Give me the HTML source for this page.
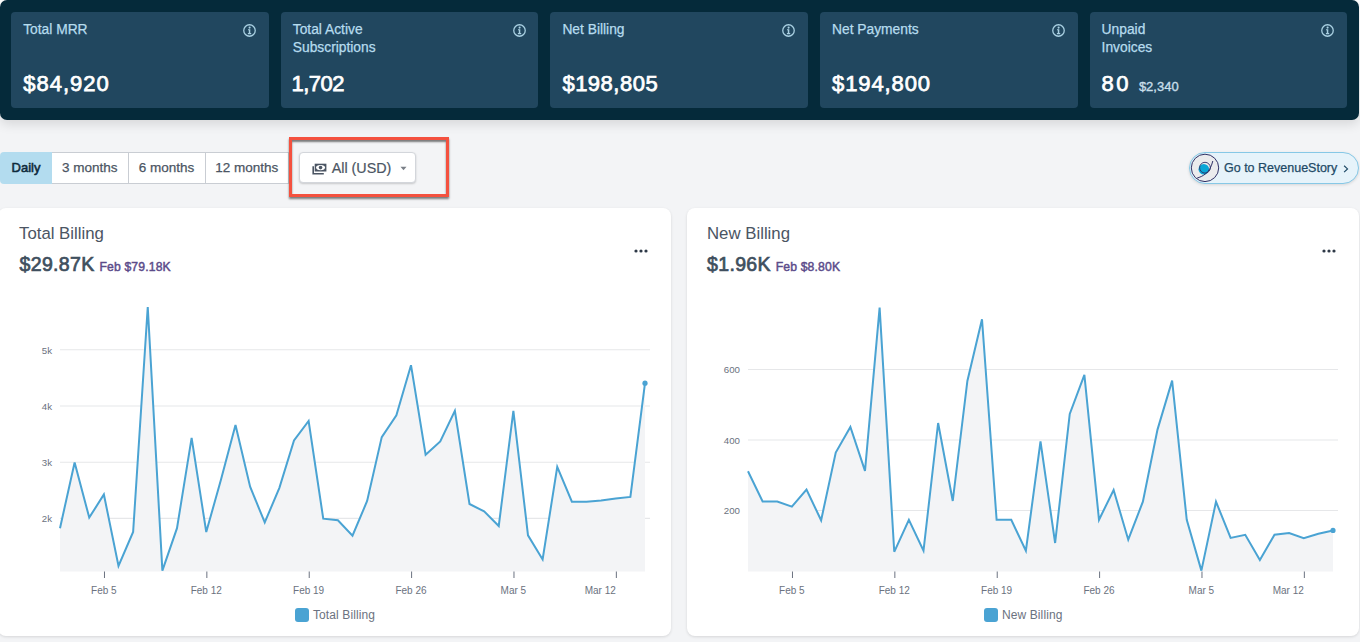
<!DOCTYPE html>
<html><head><meta charset="utf-8"><style>
*{box-sizing:border-box;margin:0;padding:0}
html,body{width:1360px;height:642px;overflow:hidden;background:#f3f4f6;font-family:"Liberation Sans",sans-serif}
.topwhite{position:absolute;left:0;top:0;width:1360px;height:40px;background:#fff}
.hdr{position:absolute;left:0;top:0;width:1359px;height:120px;background:#052a3a;border-radius:7px;box-shadow:0 4px 12px rgba(0,0,0,.12)}
.kpi{position:absolute;top:12px;width:257.6px;height:96px;background:#21475f;border-radius:4px;color:#fff}
.kt{position:absolute;left:12px;top:8.5px;font-size:13.8px;line-height:18px;-webkit-text-stroke:.25px #b6dcee;color:#b6dcee}
.ki{position:absolute;right:12.9px;top:11.8px;width:13px;height:13px}
.ki svg{display:block}
.kv{position:absolute;left:12px;top:58.8px;font-size:22px;line-height:26px;font-weight:normal;-webkit-text-stroke:.75px #fff;letter-spacing:.5px;color:#fff;white-space:nowrap}
.ksub{-webkit-text-stroke:.35px #c8dfea;font-size:13px;margin-left:7.8px;color:#c8dfea;letter-spacing:0}
.grp{position:absolute;left:0;top:152px;height:32px;display:flex}
.grp div{height:32px;line-height:30px;font-size:13.5px;color:#4b5563;-webkit-text-stroke:.25px #4b5563;background:#fff;border:1px solid #c9cdd3;border-left:none;text-align:center}
.grp .on{background:#b3dcef;color:#0e2a3b;-webkit-text-stroke:.55px #0e2a3b;border:none;border-radius:4px 0 0 4px;font-size:13px;line-height:32px}
.dd{position:absolute;left:298.7px;top:152.3px;width:117.8px;height:31px;background:#fff;border:1px solid #d3d6db;border-radius:4px;box-shadow:0 1px 2px rgba(0,0,0,.18)}
.ddt{position:absolute;left:32px;top:6px;font-size:14.3px;line-height:18px;color:#4b5563;-webkit-text-stroke:.2px #4b5563}
.red{position:absolute;left:289px;top:137px;width:160px;height:60px;border:3px solid #f4513f;box-shadow:0 2px 2px rgba(0,0,0,.5), inset 0 2px 2px rgba(0,0,0,.5)}
.rs{position:absolute;left:1189px;top:152px;width:170px;height:32px;border:1.5px solid #86c8e6;background:#e6f3fa;border-radius:16px;box-shadow:0 1px 3px rgba(0,0,0,.12)}
.rst{position:absolute;left:34px;top:7px;font-size:12.5px;line-height:16px;color:#1e4a66;-webkit-text-stroke:.25px #1e4a66}
.card{position:absolute;top:208px;height:428px;background:#fff;border-radius:8px;box-shadow:0 1px 3px rgba(0,0,0,.12)}
.ct{position:absolute;left:19px;top:223.8px;font-size:16.8px;line-height:20px;color:#4b5563}
.cv{position:absolute;left:19.5px;top:252.5px;font-size:19.5px;line-height:22px;font-weight:normal;-webkit-text-stroke:.7px #3f4f5e;letter-spacing:.35px;color:#3f4f5e;white-space:nowrap}
.cv span{font-size:12.2px;color:#5b4b8a;-webkit-text-stroke:.45px #5b4b8a;margin-left:4.8px;letter-spacing:.15px}
.dots{position:absolute;top:248.5px}
svg.ch{position:absolute;left:0;top:0}
.yl{font-size:9.7px;fill:#6b7280;font-family:"Liberation Sans",sans-serif}
.xl{font-size:10px;fill:#6b7280;font-family:"Liberation Sans",sans-serif}
.lg{position:absolute;top:608px;height:14px;font-size:12px;line-height:14px;letter-spacing:.1px;color:#6b7280;white-space:nowrap}
.lg i{display:inline-block;width:14px;height:14px;border-radius:3px;background:#4aa3d3;vertical-align:top;margin-right:4px}
</style></head><body>
<div class="topwhite"></div>
<div class="hdr"></div>
<div class="kpi" style="left:11.2px"><div class="kt">Total MRR</div><div class="ki"><svg width="13" height="13" viewBox="0 0 13 13"><circle cx="6.5" cy="6.5" r="5.75" fill="none" stroke="#a9d0e2" stroke-width="1.3"/><circle cx="6.6" cy="3.6" r="1.05" fill="#a9d0e2"/><path d="M5.0 5.2h2.3v3.9h0.9v1.1H4.9V9.1h0.9V6.3H5.0z" fill="#a9d0e2"/></svg></div><div class="kv" style="letter-spacing:1px">$84,920</div></div>
<div class="kpi" style="left:280.8px"><div class="kt">Total Active<br>Subscriptions</div><div class="ki"><svg width="13" height="13" viewBox="0 0 13 13"><circle cx="6.5" cy="6.5" r="5.75" fill="none" stroke="#a9d0e2" stroke-width="1.3"/><circle cx="6.6" cy="3.6" r="1.05" fill="#a9d0e2"/><path d="M5.0 5.2h2.3v3.9h0.9v1.1H4.9V9.1h0.9V6.3H5.0z" fill="#a9d0e2"/></svg></div><div class="kv" style="letter-spacing:-0.5px;margin-left:-1.4px">1,702</div></div>
<div class="kpi" style="left:550.4px"><div class="kt">Net Billing</div><div class="ki"><svg width="13" height="13" viewBox="0 0 13 13"><circle cx="6.5" cy="6.5" r="5.75" fill="none" stroke="#a9d0e2" stroke-width="1.3"/><circle cx="6.6" cy="3.6" r="1.05" fill="#a9d0e2"/><path d="M5.0 5.2h2.3v3.9h0.9v1.1H4.9V9.1h0.9V6.3H5.0z" fill="#a9d0e2"/></svg></div><div class="kv" style="letter-spacing:.5px">$198,805</div></div>
<div class="kpi" style="left:820px"><div class="kt">Net Payments</div><div class="ki"><svg width="13" height="13" viewBox="0 0 13 13"><circle cx="6.5" cy="6.5" r="5.75" fill="none" stroke="#a9d0e2" stroke-width="1.3"/><circle cx="6.6" cy="3.6" r="1.05" fill="#a9d0e2"/><path d="M5.0 5.2h2.3v3.9h0.9v1.1H4.9V9.1h0.9V6.3H5.0z" fill="#a9d0e2"/></svg></div><div class="kv" style="letter-spacing:.9px">$194,800</div></div>
<div class="kpi" style="left:1089.6px"><div class="kt">Unpaid<br>Invoices</div><div class="ki"><svg width="13" height="13" viewBox="0 0 13 13"><circle cx="6.5" cy="6.5" r="5.75" fill="none" stroke="#a9d0e2" stroke-width="1.3"/><circle cx="6.6" cy="3.6" r="1.05" fill="#a9d0e2"/><path d="M5.0 5.2h2.3v3.9h0.9v1.1H4.9V9.1h0.9V6.3H5.0z" fill="#a9d0e2"/></svg></div><div class="kv" style="letter-spacing:0"><span style="letter-spacing:2.5px">80</span><span class="ksub">$2,340</span></div></div>

<div class="grp"><div class="on" style="width:52px">Daily</div><div style="width:76.5px">3 months</div><div style="width:77px">6 months</div><div style="width:83.5px">12 months</div></div>
<div class="dd"><svg style="position:absolute;left:12px;top:10px" width="16" height="12" viewBox="0 0 16 12"><rect x="2.7" y="0.7" width="11.7" height="7.8" fill="#4b5563"/><ellipse cx="8.55" cy="4.6" rx="4.5" ry="2.55" fill="#fff"/><circle cx="8.55" cy="4.6" r="1.8" fill="#4b5563"/><path d="M1.2 3.3 V10.7 H11.8" fill="none" stroke="#4b5563" stroke-width="1.6"/></svg><div class="ddt">All (USD)</div><svg style="position:absolute;left:100px;top:13px" width="7" height="5" viewBox="0 0 7 5"><path d="M0.5 0.8 H6.5 L3.5 4.2 Z" fill="#7a7f87"/></svg></div>
<div class="red"></div>
<div class="rs"><svg style="position:absolute;left:-1.5px;top:-1.5px" width="32" height="32" viewBox="0 0 32 32"><circle cx="16" cy="15.9" r="13.7" fill="#ebebed" stroke="#2f3166" stroke-width="1"/><circle cx="14.8" cy="17.2" r="5.3" fill="#0aa6d6"/><circle cx="16" cy="15.7" r="5.4" fill="none" stroke="#2f3166" stroke-width="0.9"/><path d="M8.2 26 C13 24.6 21 21.5 23.8 9" fill="none" stroke="#2f3166" stroke-width="1"/></svg><div class="rst">Go to RevenueStory</div><svg style="position:absolute;left:153px;top:12px" width="6" height="8" viewBox="0 0 6 8"><path d="M1.1 0.7 L4.5 3.9 L1.1 7.1" fill="none" stroke="#1e4a66" stroke-width="1.2"/></svg></div>
<div class="card" style="left:-2px;width:673px"></div>
<div class="card" style="left:687px;width:672px"></div>
<div class="ct">Total Billing</div>
<div class="cv">$29.87K<span>Feb $79.18K</span></div>
<div class="ct" style="left:707px">New Billing</div>
<div class="cv" style="left:707px">$1.96K<span>Feb $8.80K</span></div>
<svg class="dots" style="left:634px" width="14" height="4" viewBox="0 0 14 4"><circle cx="2" cy="2" r="1.6" fill="#2e3947"/><circle cx="7" cy="2" r="1.6" fill="#2e3947"/><circle cx="12" cy="2" r="1.6" fill="#2e3947"/></svg>
<svg class="dots" style="left:1322px" width="14" height="4" viewBox="0 0 14 4"><circle cx="2" cy="2" r="1.6" fill="#2e3947"/><circle cx="7" cy="2" r="1.6" fill="#2e3947"/><circle cx="12" cy="2" r="1.6" fill="#2e3947"/></svg>
<svg class="ch" width="1360" height="642" viewBox="0 0 1360 642">
<line x1="60" y1="349.8" x2="650" y2="349.8" stroke="#e6e7e9" stroke-width="1.1"/>
<text x="52" y="353.6" text-anchor="end" class="yl">5k</text>
<line x1="60" y1="406" x2="650" y2="406" stroke="#e6e7e9" stroke-width="1.1"/>
<text x="52" y="409.8" text-anchor="end" class="yl">4k</text>
<line x1="60" y1="462.2" x2="650" y2="462.2" stroke="#e6e7e9" stroke-width="1.1"/>
<text x="52" y="466.0" text-anchor="end" class="yl">3k</text>
<line x1="60" y1="518.4" x2="650" y2="518.4" stroke="#e6e7e9" stroke-width="1.1"/>
<text x="52" y="522.1999999999999" text-anchor="end" class="yl">2k</text>
<path d="M60.00,528.20 L74.62,462.50 L89.25,517.60 L103.88,494.50 L118.50,566.00 L133.12,532.00 L147.75,307.00 L162.38,570.60 L177.00,528.20 L191.62,437.80 L206.25,532.00 L220.88,480.00 L235.50,425.00 L250.12,486.70 L264.75,522.50 L279.38,487.80 L294.00,440.40 L308.62,421.00 L323.25,518.70 L337.88,520.30 L352.50,535.70 L367.12,501.00 L381.75,437.10 L396.38,415.20 L411.00,365.20 L425.62,454.75 L440.25,441.50 L454.88,410.80 L469.50,504.00 L484.12,511.40 L498.75,526.00 L513.38,410.80 L528.00,535.30 L542.62,559.50 L557.25,466.90 L571.88,501.70 L586.50,501.70 L601.12,500.60 L615.75,498.40 L630.38,496.90 L645.00,383.20 L645.00,571.5 L60.00,571.5 Z" fill="#f3f4f6"/>
<path d="M60.00,528.20 L74.62,462.50 L89.25,517.60 L103.88,494.50 L118.50,566.00 L133.12,532.00 L147.75,307.00 L162.38,570.60 L177.00,528.20 L191.62,437.80 L206.25,532.00 L220.88,480.00 L235.50,425.00 L250.12,486.70 L264.75,522.50 L279.38,487.80 L294.00,440.40 L308.62,421.00 L323.25,518.70 L337.88,520.30 L352.50,535.70 L367.12,501.00 L381.75,437.10 L396.38,415.20 L411.00,365.20 L425.62,454.75 L440.25,441.50 L454.88,410.80 L469.50,504.00 L484.12,511.40 L498.75,526.00 L513.38,410.80 L528.00,535.30 L542.62,559.50 L557.25,466.90 L571.88,501.70 L586.50,501.70 L601.12,500.60 L615.75,498.40 L630.38,496.90 L645.00,383.20" fill="none" stroke="#4aa3d3" stroke-width="2" stroke-linejoin="miter" stroke-miterlimit="4"/>
<circle cx="645.00" cy="383.20" r="2.6" fill="#4aa3d3"/>
<line x1="104.47" y1="571.5" x2="104.47" y2="578" stroke="#6b7280" stroke-width="1"/>
<text x="103.88" y="593.8" text-anchor="middle" class="xl">Feb 5</text>
<line x1="206.85" y1="571.5" x2="206.85" y2="578" stroke="#6b7280" stroke-width="1"/>
<text x="206.25" y="593.8" text-anchor="middle" class="xl">Feb 12</text>
<line x1="309.23" y1="571.5" x2="309.23" y2="578" stroke="#6b7280" stroke-width="1"/>
<text x="308.62" y="593.8" text-anchor="middle" class="xl">Feb 19</text>
<line x1="411.60" y1="571.5" x2="411.60" y2="578" stroke="#6b7280" stroke-width="1"/>
<text x="411.00" y="593.8" text-anchor="middle" class="xl">Feb 26</text>
<line x1="513.98" y1="571.5" x2="513.98" y2="578" stroke="#6b7280" stroke-width="1"/>
<text x="513.38" y="593.8" text-anchor="middle" class="xl">Mar 5</text>
<line x1="616.35" y1="571.5" x2="616.35" y2="578" stroke="#6b7280" stroke-width="1"/>
<text x="615.75" y="593.8" text-anchor="end" class="xl">Mar 12</text>
<line x1="748" y1="369.5" x2="1338" y2="369.5" stroke="#e6e7e9" stroke-width="1.1"/>
<text x="740" y="373.3" text-anchor="end" class="yl">600</text>
<line x1="748" y1="440" x2="1338" y2="440" stroke="#e6e7e9" stroke-width="1.1"/>
<text x="740" y="443.8" text-anchor="end" class="yl">400</text>
<line x1="748" y1="510.5" x2="1338" y2="510.5" stroke="#e6e7e9" stroke-width="1.1"/>
<text x="740" y="514.3" text-anchor="end" class="yl">200</text>
<path d="M748.00,471.30 L762.62,501.50 L777.25,501.50 L791.88,506.60 L806.50,489.60 L821.12,520.30 L835.75,452.50 L850.38,426.90 L865.00,470.90 L879.62,307.60 L894.25,551.80 L908.88,519.80 L923.50,550.70 L938.12,423.00 L952.75,501.00 L967.38,381.00 L982.00,319.30 L996.62,519.80 L1011.25,519.80 L1025.88,550.70 L1040.50,441.50 L1055.12,543.00 L1069.75,414.00 L1084.38,374.90 L1099.00,519.80 L1113.62,490.00 L1128.25,539.70 L1142.88,501.70 L1157.50,429.60 L1172.12,380.60 L1186.75,519.80 L1201.38,570.60 L1216.00,501.70 L1230.62,537.90 L1245.25,534.80 L1259.88,560.00 L1274.50,534.80 L1289.12,533.00 L1303.75,538.10 L1318.38,533.70 L1333.00,530.40 L1333.00,571.5 L748.00,571.5 Z" fill="#f3f4f6"/>
<path d="M748.00,471.30 L762.62,501.50 L777.25,501.50 L791.88,506.60 L806.50,489.60 L821.12,520.30 L835.75,452.50 L850.38,426.90 L865.00,470.90 L879.62,307.60 L894.25,551.80 L908.88,519.80 L923.50,550.70 L938.12,423.00 L952.75,501.00 L967.38,381.00 L982.00,319.30 L996.62,519.80 L1011.25,519.80 L1025.88,550.70 L1040.50,441.50 L1055.12,543.00 L1069.75,414.00 L1084.38,374.90 L1099.00,519.80 L1113.62,490.00 L1128.25,539.70 L1142.88,501.70 L1157.50,429.60 L1172.12,380.60 L1186.75,519.80 L1201.38,570.60 L1216.00,501.70 L1230.62,537.90 L1245.25,534.80 L1259.88,560.00 L1274.50,534.80 L1289.12,533.00 L1303.75,538.10 L1318.38,533.70 L1333.00,530.40" fill="none" stroke="#4aa3d3" stroke-width="2" stroke-linejoin="miter" stroke-miterlimit="4"/>
<circle cx="1333.00" cy="530.40" r="2.6" fill="#4aa3d3"/>
<line x1="792.48" y1="571.5" x2="792.48" y2="578" stroke="#6b7280" stroke-width="1"/>
<text x="791.88" y="593.8" text-anchor="middle" class="xl">Feb 5</text>
<line x1="894.85" y1="571.5" x2="894.85" y2="578" stroke="#6b7280" stroke-width="1"/>
<text x="894.25" y="593.8" text-anchor="middle" class="xl">Feb 12</text>
<line x1="997.23" y1="571.5" x2="997.23" y2="578" stroke="#6b7280" stroke-width="1"/>
<text x="996.62" y="593.8" text-anchor="middle" class="xl">Feb 19</text>
<line x1="1099.60" y1="571.5" x2="1099.60" y2="578" stroke="#6b7280" stroke-width="1"/>
<text x="1099.00" y="593.8" text-anchor="middle" class="xl">Feb 26</text>
<line x1="1201.97" y1="571.5" x2="1201.97" y2="578" stroke="#6b7280" stroke-width="1"/>
<text x="1201.38" y="593.8" text-anchor="middle" class="xl">Mar 5</text>
<line x1="1304.35" y1="571.5" x2="1304.35" y2="578" stroke="#6b7280" stroke-width="1"/>
<text x="1303.75" y="593.8" text-anchor="end" class="xl">Mar 12</text>
</svg>
<div class="lg" style="left:295px"><i></i>Total Billing</div>
<div class="lg" style="left:984px"><i></i>New Billing</div>
</body></html>
